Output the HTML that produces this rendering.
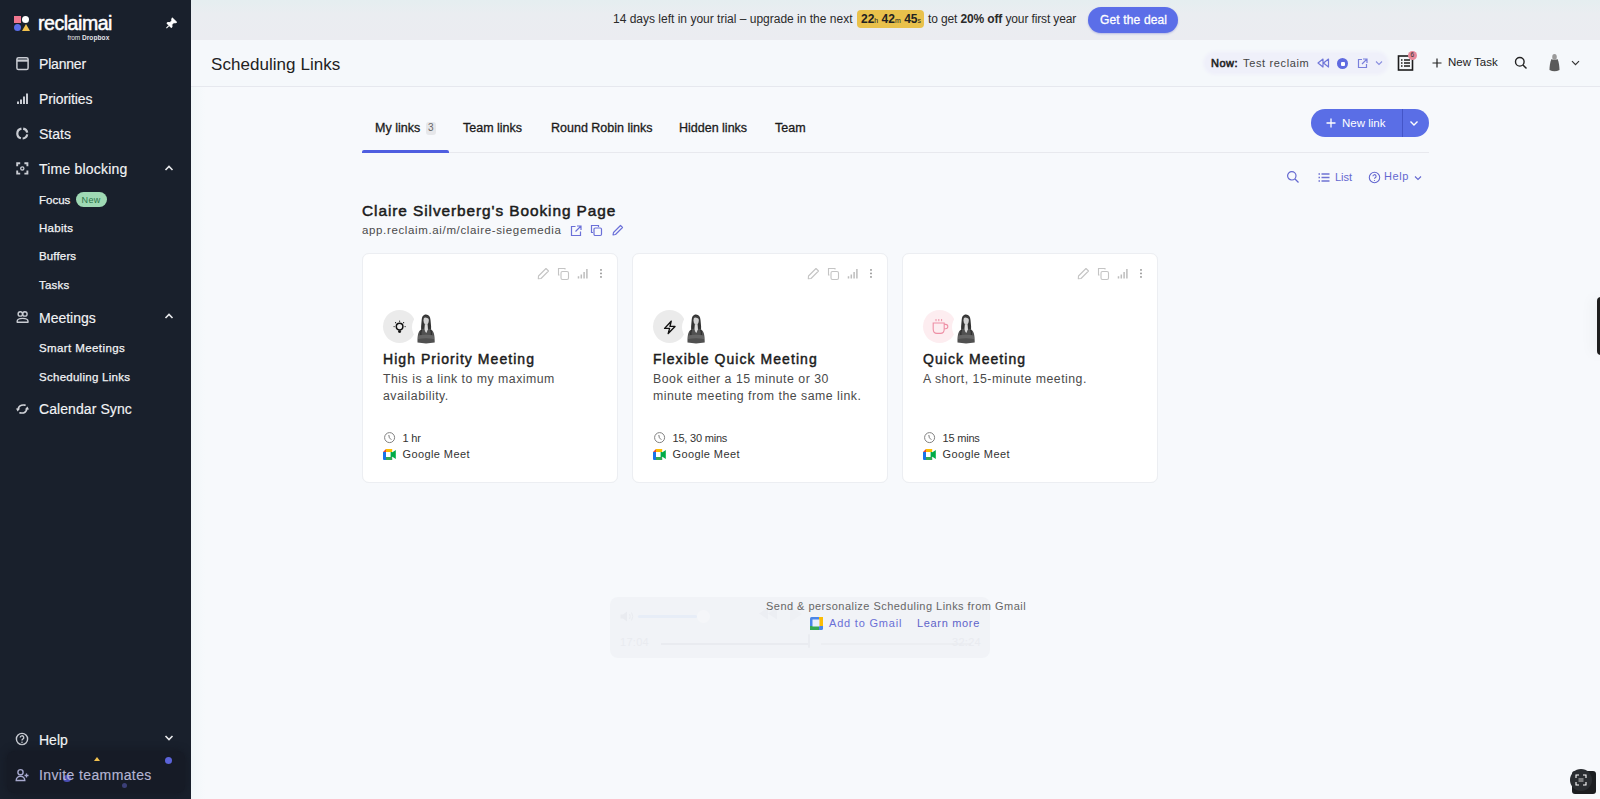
<!DOCTYPE html>
<html><head><meta charset="utf-8">
<style>
*{box-sizing:border-box;margin:0;padding:0}
html,body{width:1600px;height:799px;overflow:hidden;background:#f7f9fc;font-family:"Liberation Sans",sans-serif;color:#1c1c1c}
.abs{position:absolute}
#sb{position:absolute;left:0;top:0;width:191px;height:799px;background:#19202c}
#sb .t{position:absolute;color:#f2f3f5;white-space:nowrap;line-height:1}
#sb .nav{font-size:14px;left:39px;-webkit-text-stroke:0.15px #f2f3f5}
#sb .sub{font-size:11.5px;left:39px;-webkit-text-stroke:0.25px #f2f3f5}
#sb svg{position:absolute}
#banner{position:absolute;left:191px;top:0;width:1409px;height:40px;background:linear-gradient(#e5eef0,#eaedf1 35%,#ebecf1)}
#hdr{position:absolute;left:191px;top:40px;width:1409px;height:47px;background:#f5f8fb;border-bottom:1px solid #e6e8ee}
.tx{position:absolute;white-space:nowrap;line-height:1}
.tab{font-size:12.5px;color:#1b1b1b;-webkit-text-stroke:0.3px #1b1b1b}
.card{position:absolute;top:166px;width:256px;height:230px;background:#fff;border-radius:7px;border:1px solid #eceef2;box-shadow:0 0 1px rgba(0,0,0,.03)}
.ctitle{left:20px;top:98.3px;font-size:14px;color:#1b1b1b;-webkit-text-stroke:0.45px #1b1b1b;letter-spacing:1.05px}
.desc{left:20px;font-size:12.3px;color:#4a4a4a;letter-spacing:0.5px}
.meta{left:39.5px;font-size:11px;color:#333}
</style></head><body>
<div id="sb">
  <!-- logo -->
  <div class="abs" style="left:14px;top:16px;width:7px;height:7px;background:#f0778f"></div>
  <div class="abs" style="left:22px;top:16px;width:7px;height:7px;border-radius:50%;background:#fff"></div>
  <div class="abs" style="left:14px;top:24px;width:7px;height:7px;border-radius:50%;background:#5b6ee8"></div>
  <div class="abs" style="left:22px;top:24px;width:0;height:0;border-left:4px solid transparent;border-right:4px solid transparent;border-bottom:7px solid #f2c14e"></div>
  <div class="t" style="left:38px;top:13.5px;font-size:19.5px;color:#fff;-webkit-text-stroke:0.5px #fff;letter-spacing:-0.45px">reclaimai</div>
  <div class="t" style="left:67.5px;top:34.5px;font-size:6.5px;color:#e4e5ea"><span style="letter-spacing:-0.1px">from</span> <b style="letter-spacing:0.1px">Dropbox</b></div>

  <!-- pin -->
  <svg style="left:165px;top:17px" width="12.5" height="12.5" viewBox="0 0 14 14"><path d="M8.2 1.2 L12.8 5.8 L11.6 6.4 L9.6 6.2 L7.6 8.4 L7.8 10.8 L7 11.6 L2.4 7 L3.2 6.2 L5.6 6.4 L7.8 4.4 L7.6 2.4 Z M4.6 9.4 L1.6 12.4" fill="#fff" stroke="#fff" stroke-width="1.2" stroke-linejoin="round"/></svg>
  <!-- planner -->
  <svg style="left:15px;top:56px" width="15" height="15" viewBox="0 0 15 15"><rect x="1.9" y="1.7" width="11.2" height="11.8" rx="1.6" fill="none" stroke="#c9ccd3" stroke-width="1.5"/><path d="M1.9 4.6H13.1" stroke="#c9ccd3" stroke-width="2.2"/></svg>
  <!-- priorities -->
  <svg style="left:16px;top:92px" width="14" height="13" viewBox="0 0 14 13"><path d="M2 12V9.5M5 12V7.5M8 12V4.5M11 12V1.5" stroke="#c9ccd3" stroke-width="2"/></svg>
  <!-- stats -->
  <svg style="left:15px;top:126px" width="15" height="15" viewBox="0 0 15 15"><path d="M8.17 2.58A5.0 5.0 0 0 1 12.22 6.63M12.22 8.37A5.0 5.0 0 0 1 7.65 12.49M5.92 12.31A5.0 5.0 0 0 1 6.43 2.58" fill="none" stroke="#c9ccd3" stroke-width="2.2"/></svg>
  <!-- time blocking -->
  <svg style="left:15px;top:161px" width="15" height="15" viewBox="0 0 15 15"><path d="M2.2 5.2V2.2H5.2M9.4 2.2H12.4V5.2M12.4 9.6V12.6H9.4M5.2 12.6H2.2V9.6" fill="none" stroke="#c9ccd3" stroke-width="1.9"/><circle cx="7.3" cy="7.4" r="1.6" fill="none" stroke="#c9ccd3" stroke-width="1.3"/></svg>
  <svg style="left:164px;top:164px" width="10" height="8" viewBox="0 0 10 8"><path d="M1.5 6L5 2.5L8.5 6" fill="none" stroke="#e8e9ec" stroke-width="1.6"/></svg>
  <!-- New badge -->
  <div class="abs" style="left:76px;top:192px;width:31px;height:15px;border-radius:8px;background:#9fd9b4"></div>
  <div class="t" style="left:81.5px;top:195.5px;font-size:9px;color:#2b7549;letter-spacing:0.4px">New</div>
  <!-- meetings -->
  <svg style="left:15px;top:309px" width="15" height="15" viewBox="0 0 15 15"><circle cx="5.3" cy="4.9" r="2.2" fill="none" stroke="#c9ccd3" stroke-width="1.4"/><circle cx="9.9" cy="4.9" r="2.2" fill="none" stroke="#c9ccd3" stroke-width="1.4"/><path d="M2.2 13.2V12.2Q2.2 9.4 7.6 9.4Q13 9.4 13 12.2V13.2Z" fill="none" stroke="#c9ccd3" stroke-width="1.4" stroke-linejoin="round"/></svg>
  <svg style="left:164px;top:312px" width="10" height="8" viewBox="0 0 10 8"><path d="M1.5 6L5 2.5L8.5 6" fill="none" stroke="#e8e9ec" stroke-width="1.6"/></svg>
  <!-- calendar sync -->
  <svg style="left:15px;top:401px" width="15" height="15" viewBox="0 0 15 15"><path d="M10 4.1Q4.6 3.2 3.2 7.6M5 11.9Q10.4 12.8 11.8 8.4" fill="none" stroke="#d0d2d8" stroke-width="1.6" stroke-linecap="round"/><path d="M1 7.4L5.2 7.6L2.6 10.6Z M14 8.6L9.8 8.4L12.4 5.4Z" fill="#d0d2d8"/></svg>
  <!-- help -->
  <svg style="left:15.4px;top:732px" width="14" height="14" viewBox="0 0 14 14"><circle cx="7" cy="7" r="5.6" fill="none" stroke="#c9ccd3" stroke-width="1.4"/><path d="M5.2 5.6a1.8 1.8 0 1 1 2.6 1.6c-.6.3-.8.7-.8 1.3" fill="none" stroke="#c9ccd3" stroke-width="1.3"/><circle cx="7" cy="10.2" r=".8" fill="#c9ccd3"/></svg>
  <svg style="left:164px;top:734px" width="10" height="8" viewBox="0 0 10 8"><path d="M1.5 2L5 5.5L8.5 2" fill="none" stroke="#e8e9ec" stroke-width="1.6"/></svg>
  <!-- invite -->
  <div class="abs" style="left:7px;top:751px;width:178px;height:42px;border-radius:8px;background:#161b26;box-shadow:0 0 6px 2px #161b26"></div>
  <svg style="left:15.4px;top:767.5px" width="14" height="14" viewBox="0 0 14 14"><circle cx="5.5" cy="4.2" r="2.6" fill="none" stroke="#a7a9cf" stroke-width="1.4"/><path d="M1.2 12.5a4.3 4.3 0 0 1 8.6 0z" fill="none" stroke="#a7a9cf" stroke-width="1.4"/><path d="M11.5 5.5v4M9.5 7.5h4" stroke="#a7a9cf" stroke-width="1.3"/></svg>
  <div class="abs" style="left:94px;top:757px;width:0;height:0;border-left:3px solid transparent;border-right:3px solid transparent;border-bottom:4px solid #f2c14e"></div>
  <div class="abs" style="left:165px;top:757px;width:7px;height:7px;border-radius:50%;background:#5b63d8"></div>
  <div class="abs" style="left:62.5px;top:774.5px;width:8px;height:7px;border-radius:50%;background:#5558cc;opacity:.85"></div>
  <div class="abs" style="left:122px;top:783px;width:5px;height:5px;border-radius:50%;background:#4c4f9a;opacity:.7"></div>
  <div class="t nav" style="top:57px;letter-spacing:-0.2px">Planner</div>
  <div class="t nav" style="top:92px;letter-spacing:-0.1px">Priorities</div>
  <div class="t nav" style="top:127px">Stats</div>
  <div class="t nav" style="top:162px;letter-spacing:0.2px">Time blocking</div>
  <div class="t sub" style="top:195px">Focus</div>
  <div class="t sub" style="top:222.5px;letter-spacing:0.3px">Habits</div>
  <div class="t sub" style="top:251px;letter-spacing:0.15px">Buffers</div>
  <div class="t sub" style="top:279.5px;letter-spacing:0.2px">Tasks</div>
  <div class="t nav" style="top:310.5px">Meetings</div>
  <div class="t sub" style="top:343px;letter-spacing:0.4px">Smart Meetings</div>
  <div class="t sub" style="top:371.5px;letter-spacing:0.27px">Scheduling Links</div>
  <div class="t nav" style="top:402px;letter-spacing:0.08px">Calendar Sync</div>
  <div class="t nav" style="top:733px">Help</div>
  <div class="t nav" style="top:767.5px;color:#b4b5d2;-webkit-text-stroke:0.15px #b4b5d2;letter-spacing:0.38px">Invite teammates</div>
</div>
<div id="banner">
  <div class="tx" style="left:422px;top:13px;font-size:12px;color:#2a2a2a">14 days left in your trial – upgrade in the next</div>
  <div class="abs" style="left:666px;top:10px;width:67px;height:18px;border-radius:4px;background:#e9c14b"></div>
  <div class="tx" style="left:670px;top:13px;font-size:12px;font-weight:bold;color:#222">22<span style="font-size:7px;font-weight:normal">h</span> 42<span style="font-size:7px;font-weight:normal">m</span> 45<span style="font-size:7px;font-weight:normal">s</span></div>
  <div class="tx" style="left:737px;top:13px;font-size:12px;color:#2a2a2a;letter-spacing:-0.13px">to get <b>20% off</b> your first year</div>
  <div class="abs" style="left:897px;top:7px;width:90px;height:26px;border-radius:13px;background:#5b6ee8;box-shadow:0 1px 2px rgba(60,70,200,.3)"></div>
  <div class="tx" style="left:909px;top:13.5px;font-size:12px;color:#fff;-webkit-text-stroke:0.3px #fff;letter-spacing:0.15px">Get the deal</div>
</div>
<div id="hdr">
  <div class="tx" style="left:20px;top:16px;font-size:17px;color:#222;letter-spacing:0.05px">Scheduling Links</div>
  <div class="abs" style="left:1014px;top:13px;width:182px;height:20px;border-radius:10px;background:#eff0fa;box-shadow:0 0 3px 2px #f0f1fa"></div>
  <div class="tx" style="left:1020px;top:18px;font-size:11px;color:#222;-webkit-text-stroke:0.55px #222;letter-spacing:0.5px">Now:</div>
  <div class="tx" style="left:1052px;top:18px;font-size:11px;color:#444;letter-spacing:0.64px">Test reclaim</div>
  <svg class="abs" style="left:1125px;top:18px" width="14" height="10" viewBox="0 0 14 10"><path d="M7 1L2 5L7 9ZM12.5 1L7.5 5L12.5 9Z" fill="none" stroke="#6f76d9" stroke-width="1.2" stroke-linejoin="round"/></svg>
  <div class="abs" style="left:1146px;top:18px;width:11px;height:11px;border-radius:50%;background:#5f6ae0"></div>
  <div class="abs" style="left:1149.5px;top:21.5px;width:4px;height:4px;border-radius:1px;background:#fff"></div>
  <svg class="abs" style="left:1166px;top:18px" width="11" height="11" viewBox="0 0 11 11"><path d="M5 1.5H1.5V9.5H9.5V6M6 1H10V5M10 1L5 6" fill="none" stroke="#7a80dc" stroke-width="1.2"/></svg>
  <svg class="abs" style="left:1184px;top:20px" width="8" height="6" viewBox="0 0 8 6"><path d="M1 1.5L4 4.5L7 1.5" fill="none" stroke="#8a8fe0" stroke-width="1.1"/></svg>
  <svg class="abs" style="left:1206px;top:14px" width="17" height="17" viewBox="0 0 17 17"><rect x="1.5" y="2" width="14" height="14" fill="none" stroke="#1d1d1d" stroke-width="1.6"/><path d="M4 6h1.5M7 6h6M4 9h1.5M7 9h6M4 12h1.5M7 12h6" stroke="#1d1d1d" stroke-width="1.3"/></svg>
  <div class="abs" style="left:1217px;top:11px;width:9px;height:9px;border-radius:50%;background:#e8899b"></div>
  <div class="tx" style="left:1219.5px;top:12px;font-size:6.5px;color:#333">6</div>
  <svg class="abs" style="left:1241px;top:18px" width="10" height="10" viewBox="0 0 10 10"><path d="M5 0.5V9.5M0.5 5H9.5" stroke="#222" stroke-width="1.2"/></svg>
  <div class="tx" style="left:1257px;top:17px;font-size:11.5px;color:#222">New Task</div>
  <svg class="abs" style="left:1323px;top:16px" width="14" height="14" viewBox="0 0 14 14"><circle cx="5.8" cy="5.8" r="4.3" fill="none" stroke="#222" stroke-width="1.4"/><path d="M9 9L12.5 12.5" stroke="#222" stroke-width="1.5"/></svg>
  <svg class="abs" style="left:1357px;top:13px" width="13" height="20" viewBox="0 0 13 20"><ellipse cx="6.5" cy="4" rx="2.3" ry="3" fill="#9a9a9a"/><path d="M3.5 6C2 9 1.5 14 1.5 17Q6.5 19.5 11.5 17C11.5 14 11 9 9.5 6Q6.5 8 3.5 6Z" fill="#5a5a5a"/></svg>
  <svg class="abs" style="left:1380px;top:20px" width="9" height="6" viewBox="0 0 9 6"><path d="M1 1.2L4.5 4.7L8 1.2" fill="none" stroke="#333" stroke-width="1.2"/></svg>
</div>
<div id="main" style="position:absolute;left:191px;top:87px;width:1409px;height:712px">
  <!-- tabs -->
  <div class="tx tab" style="left:184px;top:35px">My links</div>
  <div class="abs" style="left:235px;top:35px;width:10px;height:13px;border-radius:3px;background:#e6e7ea"></div>
  <div class="tx" style="left:237px;top:36px;font-size:10px;color:#666">3</div>
  <div class="tx tab" style="left:272px;top:35px">Team links</div>
  <div class="tx tab" style="left:360px;top:35px">Round Robin links</div>
  <div class="tx tab" style="left:488px;top:35px">Hidden links</div>
  <div class="tx tab" style="left:584px;top:35px">Team</div>
  <div class="abs" style="left:171px;top:65px;width:1067px;height:1px;background:#e8e9ee"></div>
  <div class="abs" style="left:171px;top:63px;width:87px;height:3px;border-radius:2px 2px 0 0;background:#4f5ee0"></div>
  <!-- new link button -->
  <div class="abs" style="left:1120px;top:22px;width:118px;height:28px;border-radius:14px;background:#5a6ee6"></div>
  <div class="abs" style="left:1211px;top:22px;width:1px;height:28px;background:#4455c8"></div>
  <svg class="abs" style="left:1135px;top:31px" width="10" height="10" viewBox="0 0 10 10"><path d="M5 0.5V9.5M0.5 5H9.5" stroke="#fff" stroke-width="1.3"/></svg>
  <div class="tx" style="left:1151px;top:31px;font-size:11.5px;color:#fff">New link</div>
  <svg class="abs" style="left:1218px;top:33px" width="10" height="7" viewBox="0 0 10 7"><path d="M1.5 1.5L5 5L8.5 1.5" fill="none" stroke="#fff" stroke-width="1.4"/></svg>
  <!-- toolbar -->
  <svg class="abs" style="left:1095px;top:83px" width="14" height="14" viewBox="0 0 14 14"><circle cx="5.8" cy="5.8" r="4.2" fill="none" stroke="#6468d0" stroke-width="1.2"/><path d="M9 9L12.5 12.5" stroke="#6468d0" stroke-width="1.3"/></svg>
  <svg class="abs" style="left:1127px;top:86px" width="12" height="9" viewBox="0 0 12 9"><path d="M0.5 1h1.5M3.5 1H11.5M0.5 4.5h1.5M3.5 4.5H11.5M0.5 8h1.5M3.5 8H11.5" stroke="#6f73d2" stroke-width="1.3"/></svg>
  <div class="tx" style="left:1144px;top:85px;font-size:11px;color:#6468d0">List</div>
  <svg class="abs" style="left:1177px;top:84px" width="13" height="13" viewBox="0 0 13 13"><circle cx="6.5" cy="6.5" r="5.2" fill="none" stroke="#6468d0" stroke-width="1.1"/><path d="M4.9 5.2a1.6 1.6 0 1 1 2.3 1.5c-.5.3-.7.6-.7 1.1" fill="none" stroke="#6468d0" stroke-width="1.1"/><circle cx="6.5" cy="9.5" r=".6" fill="#6468d0"/></svg>
  <div class="tx" style="left:1193px;top:84px;font-size:11px;color:#6468d0;letter-spacing:0.6px">Help</div>
  <svg class="abs" style="left:1223px;top:88px" width="8" height="6" viewBox="0 0 8 6"><path d="M1 1.5L4 4.5L7 1.5" fill="none" stroke="#6468d0" stroke-width="1.1"/></svg>
  <!-- booking page heading -->
  <div class="tx" style="left:171px;top:115.5px;font-size:15.4px;color:#1b1b1b;-webkit-text-stroke:0.5px #1b1b1b;letter-spacing:0.93px">Claire Silverberg's Booking Page</div>
  <div class="tx" style="left:171px;top:137.5px;font-size:11.5px;color:#4a4a4a;letter-spacing:0.64px">app.reclaim.ai/m/claire-siegemedia</div>
  <svg class="abs" style="left:379px;top:138px" width="12" height="12" viewBox="0 0 12 12"><path d="M5.5 1.5H1.5V10.5H10.5V6.5M7 1H11V5M11 1L5.5 6.5" fill="none" stroke="#6b70d8" stroke-width="1.2"/></svg>
  <svg class="abs" style="left:399px;top:137px" width="13" height="13" viewBox="0 0 13 13"><path d="M8.5 3V1.5H1.5V8.5H3" fill="none" stroke="#6b70d8" stroke-width="1.2"/><rect x="4" y="4" width="7.5" height="7.5" rx="1.2" fill="none" stroke="#6b70d8" stroke-width="1.2"/></svg>
  <svg class="abs" style="left:421px;top:137px" width="12" height="12" viewBox="0 0 12 12"><path d="M8.5 1.5L10.5 3.5L3.5 10.5L1 11L1.5 8.5Z" fill="none" stroke="#6b70d8" stroke-width="1.2" stroke-linejoin="round"/></svg>
  <div class="card" style="left:171px">
    <svg class="abs" style="left:174px;top:13px" width="13" height="13" viewBox="0 0 13 13"><path d="M9 1.5L11.5 4L4 11.5L1.3 11.7L1.5 9Z" fill="none" stroke="#c4c4c4" stroke-width="1.1" stroke-linejoin="round"/></svg>
    <svg class="abs" style="left:194px;top:13px" width="13" height="14" viewBox="0 0 13 14"><path d="M8 2.5V1.5H1.5V8H2.5" fill="none" stroke="#c4c4c4" stroke-width="1.1"/><rect x="4" y="4.5" width="7.5" height="8" rx="1.5" fill="none" stroke="#c4c4c4" stroke-width="1.1"/></svg>
    <svg class="abs" style="left:214px;top:14px" width="11" height="11" viewBox="0 0 11 11"><path d="M1.5 10.5V8.3M4.3 10.5V6.6M7.1 10.5V4M9.9 10.5V1" stroke="#bdbdbd" stroke-width="1.5"/></svg>
    <svg class="abs" style="left:236px;top:14px" width="4" height="11" viewBox="0 0 4 11"><circle cx="2" cy="1.9" r=".9" fill="#8f8f8f"/><circle cx="2" cy="5.4" r=".9" fill="#8f8f8f"/><circle cx="2" cy="8.9" r=".9" fill="#8f8f8f"/></svg>
    <div class="abs" style="left:20px;top:56px;width:33px;height:33px;border-radius:50%;background:#ebebeb"><svg class="abs" style="left:10px;top:9.5px" width="14" height="14" viewBox="0 0 14 14"><circle cx="6.6" cy="6.6" r="3.3" fill="none" stroke="#111" stroke-width="1.5"/><path d="M5.4 10.8H7.8L7.4 12.4H5.8Z" fill="#111" stroke="#111" stroke-width=".8" stroke-linejoin="round"/><circle cx="6.6" cy="1.2" r=".6" fill="#111"/><circle cx="2.6" cy="2.7" r=".6" fill="#111"/><circle cx="10.6" cy="2.7" r=".6" fill="#111"/><circle cx="1.1" cy="6.6" r=".6" fill="#111"/><circle cx="12.1" cy="6.6" r=".6" fill="#111"/></svg></div>
    <div class="abs" style="left:48.5px;top:57.5px;width:30px;height:30px;border-radius:50%;background:#fff"></div>
    <svg class="abs" style="left:53.5px;top:59.5px" width="18" height="30" viewBox="0 0 18 30">
<path d="M9 0.4C6.2 0.4 4.9 2.6 4.7 6L4.1 12.5Q3.8 15.5 4.8 16.5L13.4 16.5Q14.4 15.5 14.1 12.5L13.5 6C13.3 2.6 11.8 0.4 9 0.4Z" fill="#333"/>
<path d="M9.2 2.0C7.4 2.0 6.5 3.8 6.5 6.3C6.5 9.2 7.7 10.8 9.2 10.8C10.7 10.8 11.8 9.2 11.8 6.3C11.8 3.8 11 2.0 9.2 2.0Z" fill="#d2d2d2"/>
<path d="M6.2 4.6Q8.4 2.2 12.2 5L11.8 2.8Q9 0.9 6.5 2.9Z" fill="#3c3c3c"/>
<path d="M7.8 10.2H10.6L11 15.5L9.2 19L7.4 15.5Z" fill="#dcdcdc"/>
<path d="M0.5 28.6C0.4 21.5 1.2 17 4.2 15.6L6.6 14.6L9.2 19L11.6 14.6L14 15.6C17 17 17.8 21.5 17.7 28.6Q9 30.2 0.5 28.6Z" fill="#505050"/>
<path d="M1.2 21.5Q9 20 16.8 21.5L17 25Q9 23.6 1 25Z" fill="#888" opacity=".4"/>
<path d="M4.6 15.8Q3.4 18 3.9 21M13.6 15.8Q14.8 18 14.3 21" stroke="#2a2a2a" stroke-width="1.1" fill="none"/>
</svg>
    <div class="tx ctitle">High Priority Meeting</div>
    <div class="tx desc" style="top:119.0px">This is a link to my maximum</div><div class="tx desc" style="top:135.7px">availability.</div>
    <svg class="abs" style="left:20.5px;top:178px" width="12" height="12" viewBox="0 0 12 12"><circle cx="5.6" cy="5.6" r="5" fill="none" stroke="#808080" stroke-width="1"/><path d="M4.8 3L5.4 5.8L7.4 7.8" fill="none" stroke="#808080" stroke-width="1"/></svg>
    <div class="tx meta" style="top:178.5px;letter-spacing:-0.2px">1 hr</div>
    <svg class="abs" style="left:20px;top:195px" width="13" height="11" viewBox="0 0 13 11">
<path d="M0 3L3 0V3Z" fill="#ea4335"/>
<path d="M3 0H9.2V3H3Z" fill="#fbbc04"/>
<path d="M0 3H3V11H1Q0 11 0 10Z" fill="#1a73e8"/>
<path d="M3 8H9.2V11H3Z" fill="#34a853"/>
<path d="M3 3H7.6V8H3Z" fill="#fff"/>
<path d="M7.6 4.5L12.8 1V10L7.6 6.5ZM7.6 3H9.2V8H7.6Z" fill="#00ac47"/>
</svg>
    <div class="tx meta" style="top:195px;letter-spacing:0.4px">Google Meet</div>
  </div>
  <div class="card" style="left:441px">
    <svg class="abs" style="left:174px;top:13px" width="13" height="13" viewBox="0 0 13 13"><path d="M9 1.5L11.5 4L4 11.5L1.3 11.7L1.5 9Z" fill="none" stroke="#c4c4c4" stroke-width="1.1" stroke-linejoin="round"/></svg>
    <svg class="abs" style="left:194px;top:13px" width="13" height="14" viewBox="0 0 13 14"><path d="M8 2.5V1.5H1.5V8H2.5" fill="none" stroke="#c4c4c4" stroke-width="1.1"/><rect x="4" y="4.5" width="7.5" height="8" rx="1.5" fill="none" stroke="#c4c4c4" stroke-width="1.1"/></svg>
    <svg class="abs" style="left:214px;top:14px" width="11" height="11" viewBox="0 0 11 11"><path d="M1.5 10.5V8.3M4.3 10.5V6.6M7.1 10.5V4M9.9 10.5V1" stroke="#bdbdbd" stroke-width="1.5"/></svg>
    <svg class="abs" style="left:236px;top:14px" width="4" height="11" viewBox="0 0 4 11"><circle cx="2" cy="1.9" r=".9" fill="#8f8f8f"/><circle cx="2" cy="5.4" r=".9" fill="#8f8f8f"/><circle cx="2" cy="8.9" r=".9" fill="#8f8f8f"/></svg>
    <div class="abs" style="left:20px;top:56px;width:33px;height:33px;border-radius:50%;background:#ebebeb"><svg class="abs" style="left:9.5px;top:9.5px" width="14" height="15" viewBox="0 0 14 15"><path d="M8.2 1.2L1.6 8.4H6.6L5.2 13.6L12 6.4H7Z" fill="none" stroke="#111" stroke-width="1.4" stroke-linejoin="round"/></svg></div>
    <div class="abs" style="left:48.5px;top:57.5px;width:30px;height:30px;border-radius:50%;background:#fff"></div>
    <svg class="abs" style="left:53.5px;top:59.5px" width="18" height="30" viewBox="0 0 18 30">
<path d="M9 0.4C6.2 0.4 4.9 2.6 4.7 6L4.1 12.5Q3.8 15.5 4.8 16.5L13.4 16.5Q14.4 15.5 14.1 12.5L13.5 6C13.3 2.6 11.8 0.4 9 0.4Z" fill="#333"/>
<path d="M9.2 2.0C7.4 2.0 6.5 3.8 6.5 6.3C6.5 9.2 7.7 10.8 9.2 10.8C10.7 10.8 11.8 9.2 11.8 6.3C11.8 3.8 11 2.0 9.2 2.0Z" fill="#d2d2d2"/>
<path d="M6.2 4.6Q8.4 2.2 12.2 5L11.8 2.8Q9 0.9 6.5 2.9Z" fill="#3c3c3c"/>
<path d="M7.8 10.2H10.6L11 15.5L9.2 19L7.4 15.5Z" fill="#dcdcdc"/>
<path d="M0.5 28.6C0.4 21.5 1.2 17 4.2 15.6L6.6 14.6L9.2 19L11.6 14.6L14 15.6C17 17 17.8 21.5 17.7 28.6Q9 30.2 0.5 28.6Z" fill="#505050"/>
<path d="M1.2 21.5Q9 20 16.8 21.5L17 25Q9 23.6 1 25Z" fill="#888" opacity=".4"/>
<path d="M4.6 15.8Q3.4 18 3.9 21M13.6 15.8Q14.8 18 14.3 21" stroke="#2a2a2a" stroke-width="1.1" fill="none"/>
</svg>
    <div class="tx ctitle">Flexible Quick Meeting</div>
    <div class="tx desc" style="top:119.0px">Book either a 15 minute or 30</div><div class="tx desc" style="top:135.7px">minute meeting from the same link.</div>
    <svg class="abs" style="left:20.5px;top:178px" width="12" height="12" viewBox="0 0 12 12"><circle cx="5.6" cy="5.6" r="5" fill="none" stroke="#808080" stroke-width="1"/><path d="M4.8 3L5.4 5.8L7.4 7.8" fill="none" stroke="#808080" stroke-width="1"/></svg>
    <div class="tx meta" style="top:178.5px;letter-spacing:-0.2px">15, 30 mins</div>
    <svg class="abs" style="left:20px;top:195px" width="13" height="11" viewBox="0 0 13 11">
<path d="M0 3L3 0V3Z" fill="#ea4335"/>
<path d="M3 0H9.2V3H3Z" fill="#fbbc04"/>
<path d="M0 3H3V11H1Q0 11 0 10Z" fill="#1a73e8"/>
<path d="M3 8H9.2V11H3Z" fill="#34a853"/>
<path d="M3 3H7.6V8H3Z" fill="#fff"/>
<path d="M7.6 4.5L12.8 1V10L7.6 6.5ZM7.6 3H9.2V8H7.6Z" fill="#00ac47"/>
</svg>
    <div class="tx meta" style="top:195px;letter-spacing:0.4px">Google Meet</div>
  </div>
  <div class="card" style="left:711px">
    <svg class="abs" style="left:174px;top:13px" width="13" height="13" viewBox="0 0 13 13"><path d="M9 1.5L11.5 4L4 11.5L1.3 11.7L1.5 9Z" fill="none" stroke="#c4c4c4" stroke-width="1.1" stroke-linejoin="round"/></svg>
    <svg class="abs" style="left:194px;top:13px" width="13" height="14" viewBox="0 0 13 14"><path d="M8 2.5V1.5H1.5V8H2.5" fill="none" stroke="#c4c4c4" stroke-width="1.1"/><rect x="4" y="4.5" width="7.5" height="8" rx="1.5" fill="none" stroke="#c4c4c4" stroke-width="1.1"/></svg>
    <svg class="abs" style="left:214px;top:14px" width="11" height="11" viewBox="0 0 11 11"><path d="M1.5 10.5V8.3M4.3 10.5V6.6M7.1 10.5V4M9.9 10.5V1" stroke="#bdbdbd" stroke-width="1.5"/></svg>
    <svg class="abs" style="left:236px;top:14px" width="4" height="11" viewBox="0 0 4 11"><circle cx="2" cy="1.9" r=".9" fill="#8f8f8f"/><circle cx="2" cy="5.4" r=".9" fill="#8f8f8f"/><circle cx="2" cy="8.9" r=".9" fill="#8f8f8f"/></svg>
    <div class="abs" style="left:20px;top:56px;width:33px;height:33px;border-radius:50%;background:#fdedf0"><svg class="abs" style="left:8.5px;top:8px" width="17" height="17" viewBox="0 0 17 17"><path d="M4 1v2.2M6.8 1v2.2M9.6 1v2.2" stroke="#ee8fa5" stroke-width="1"/><path d="M1.2 5H12.2V11Q12.2 15.4 8.4 15.4H5Q1.2 15.4 1.2 11Z" fill="none" stroke="#ee8fa5" stroke-width="1.1"/><path d="M12.2 6.4H13.6Q15.8 6.4 15.8 8.6Q15.8 10.8 13.6 10.8H12.2" fill="none" stroke="#ee8fa5" stroke-width="1.1"/></svg></div>
    <div class="abs" style="left:48.5px;top:57.5px;width:30px;height:30px;border-radius:50%;background:#fff"></div>
    <svg class="abs" style="left:53.5px;top:59.5px" width="18" height="30" viewBox="0 0 18 30">
<path d="M9 0.4C6.2 0.4 4.9 2.6 4.7 6L4.1 12.5Q3.8 15.5 4.8 16.5L13.4 16.5Q14.4 15.5 14.1 12.5L13.5 6C13.3 2.6 11.8 0.4 9 0.4Z" fill="#333"/>
<path d="M9.2 2.0C7.4 2.0 6.5 3.8 6.5 6.3C6.5 9.2 7.7 10.8 9.2 10.8C10.7 10.8 11.8 9.2 11.8 6.3C11.8 3.8 11 2.0 9.2 2.0Z" fill="#d2d2d2"/>
<path d="M6.2 4.6Q8.4 2.2 12.2 5L11.8 2.8Q9 0.9 6.5 2.9Z" fill="#3c3c3c"/>
<path d="M7.8 10.2H10.6L11 15.5L9.2 19L7.4 15.5Z" fill="#dcdcdc"/>
<path d="M0.5 28.6C0.4 21.5 1.2 17 4.2 15.6L6.6 14.6L9.2 19L11.6 14.6L14 15.6C17 17 17.8 21.5 17.7 28.6Q9 30.2 0.5 28.6Z" fill="#505050"/>
<path d="M1.2 21.5Q9 20 16.8 21.5L17 25Q9 23.6 1 25Z" fill="#888" opacity=".4"/>
<path d="M4.6 15.8Q3.4 18 3.9 21M13.6 15.8Q14.8 18 14.3 21" stroke="#2a2a2a" stroke-width="1.1" fill="none"/>
</svg>
    <div class="tx ctitle">Quick Meeting</div>
    <div class="tx desc" style="top:119.0px">A short, 15-minute meeting.</div>
    <svg class="abs" style="left:20.5px;top:178px" width="12" height="12" viewBox="0 0 12 12"><circle cx="5.6" cy="5.6" r="5" fill="none" stroke="#808080" stroke-width="1"/><path d="M4.8 3L5.4 5.8L7.4 7.8" fill="none" stroke="#808080" stroke-width="1"/></svg>
    <div class="tx meta" style="top:178.5px;letter-spacing:-0.2px">15 mins</div>
    <svg class="abs" style="left:20px;top:195px" width="13" height="11" viewBox="0 0 13 11">
<path d="M0 3L3 0V3Z" fill="#ea4335"/>
<path d="M3 0H9.2V3H3Z" fill="#fbbc04"/>
<path d="M0 3H3V11H1Q0 11 0 10Z" fill="#1a73e8"/>
<path d="M3 8H9.2V11H3Z" fill="#34a853"/>
<path d="M3 3H7.6V8H3Z" fill="#fff"/>
<path d="M7.6 4.5L12.8 1V10L7.6 6.5ZM7.6 3H9.2V8H7.6Z" fill="#00ac47"/>
</svg>
    <div class="tx meta" style="top:195px;letter-spacing:0.4px">Google Meet</div>
  </div>
  <!-- gmail promo -->
  <div class="abs" style="left:419px;top:510px;width:380px;height:61px;border-radius:8px;background:#f1f3f7"></div>
  <svg class="abs" style="left:429px;top:524px" width="15" height="11" viewBox="0 0 15 11"><path d="M0.5 3.5H3L7 0.5V10.5L3 7.5H0.5Z" fill="#e9ebf0"/><path d="M9.5 3Q11 5.5 9.5 8M11.5 1.5Q14 5.5 11.5 9.5" fill="none" stroke="#e9ebf0" stroke-width="1"/></svg>
  <div class="abs" style="left:447px;top:527.5px;width:59px;height:3px;border-radius:2px;background:#e7edf7"></div>
  <div class="abs" style="left:506px;top:523px;width:13px;height:13px;border-radius:50%;background:#f5f6f9"></div>
  <svg class="abs" style="left:567px;top:520px" width="20" height="13" viewBox="0 0 20 13"><path d="M10 0.5L1 6.5L10 12.5ZM19 0.5L10 6.5L19 12.5Z" fill="#eceef3"/></svg>
  <svg class="abs" style="left:598px;top:518px" width="14" height="18" viewBox="0 0 14 18"><path d="M1 1L13 9L1 17Z" fill="#eef0f4"/></svg>
  <div class="tx" style="left:429px;top:550px;font-size:11px;color:#e9ebf0;letter-spacing:0.3px">17:04</div>
  <div class="abs" style="left:470px;top:556px;width:148px;height:1.5px;background:#e9ebf0"></div>
  <div class="abs" style="left:617px;top:547px;width:2px;height:14px;border-radius:1px;background:#eaecf1"></div>
  <div class="abs" style="left:630px;top:556px;width:150px;height:1.5px;background:#eceef2"></div>
  <div class="tx" style="left:761px;top:550px;font-size:11px;color:#e9ebf0;letter-spacing:0.3px">32:24</div>
  <div class="tx" style="left:575px;top:513.5px;font-size:11px;color:#666;letter-spacing:0.47px">Send &amp; personalize Scheduling Links from Gmail</div>
  <svg class="abs" style="left:619px;top:530px" width="13" height="13" viewBox="0 0 13 13"><rect x="0" y="0" width="13" height="13" rx="1.5" fill="#4a86e8"/><rect x="0" y="9" width="9" height="4" fill="#34a853"/><rect x="9" y="0" width="4" height="9" fill="#fbbc04"/><rect x="2.5" y="2.5" width="7" height="7" fill="#e8effc"/></svg>
  <div class="tx" style="left:638px;top:531px;font-size:11px;color:#6a6fd6;letter-spacing:0.8px">Add to Gmail</div>
  <div class="tx" style="left:726px;top:531px;font-size:11px;color:#5f63c9;letter-spacing:0.67px">Learn more</div>
</div>
<div class="abs" style="left:191px;top:87px;width:14px;height:712px;background:linear-gradient(to right,#f1f7f9,rgba(247,249,252,0))"></div>
<!-- right edge handle -->
<div class="abs" style="left:1596.5px;top:297px;width:8px;height:58px;border-radius:4px;background:#1e1e1e;box-shadow:-4px 0 14px rgba(0,0,0,.05)"></div>
<!-- bottom right icon -->
<div class="abs" style="left:1572px;top:771px;width:24px;height:23px;border-radius:3px;background:#1b1d20"></div>
<div class="abs" style="left:1570px;top:769px;width:22px;height:22px;border-radius:50%;background:#2a2d31"></div>
<svg class="abs" style="left:1575px;top:774px" width="12" height="12" viewBox="0 0 12 12"><path d="M1 4V1H4M8 1H11V4M11 8V11H8M4 11H1V8" fill="none" stroke="#fff" stroke-width="1.1"/><path d="M3.5 5h5M3.5 7h5" stroke="#ccc" stroke-width="1.2"/></svg>

</body></html>
